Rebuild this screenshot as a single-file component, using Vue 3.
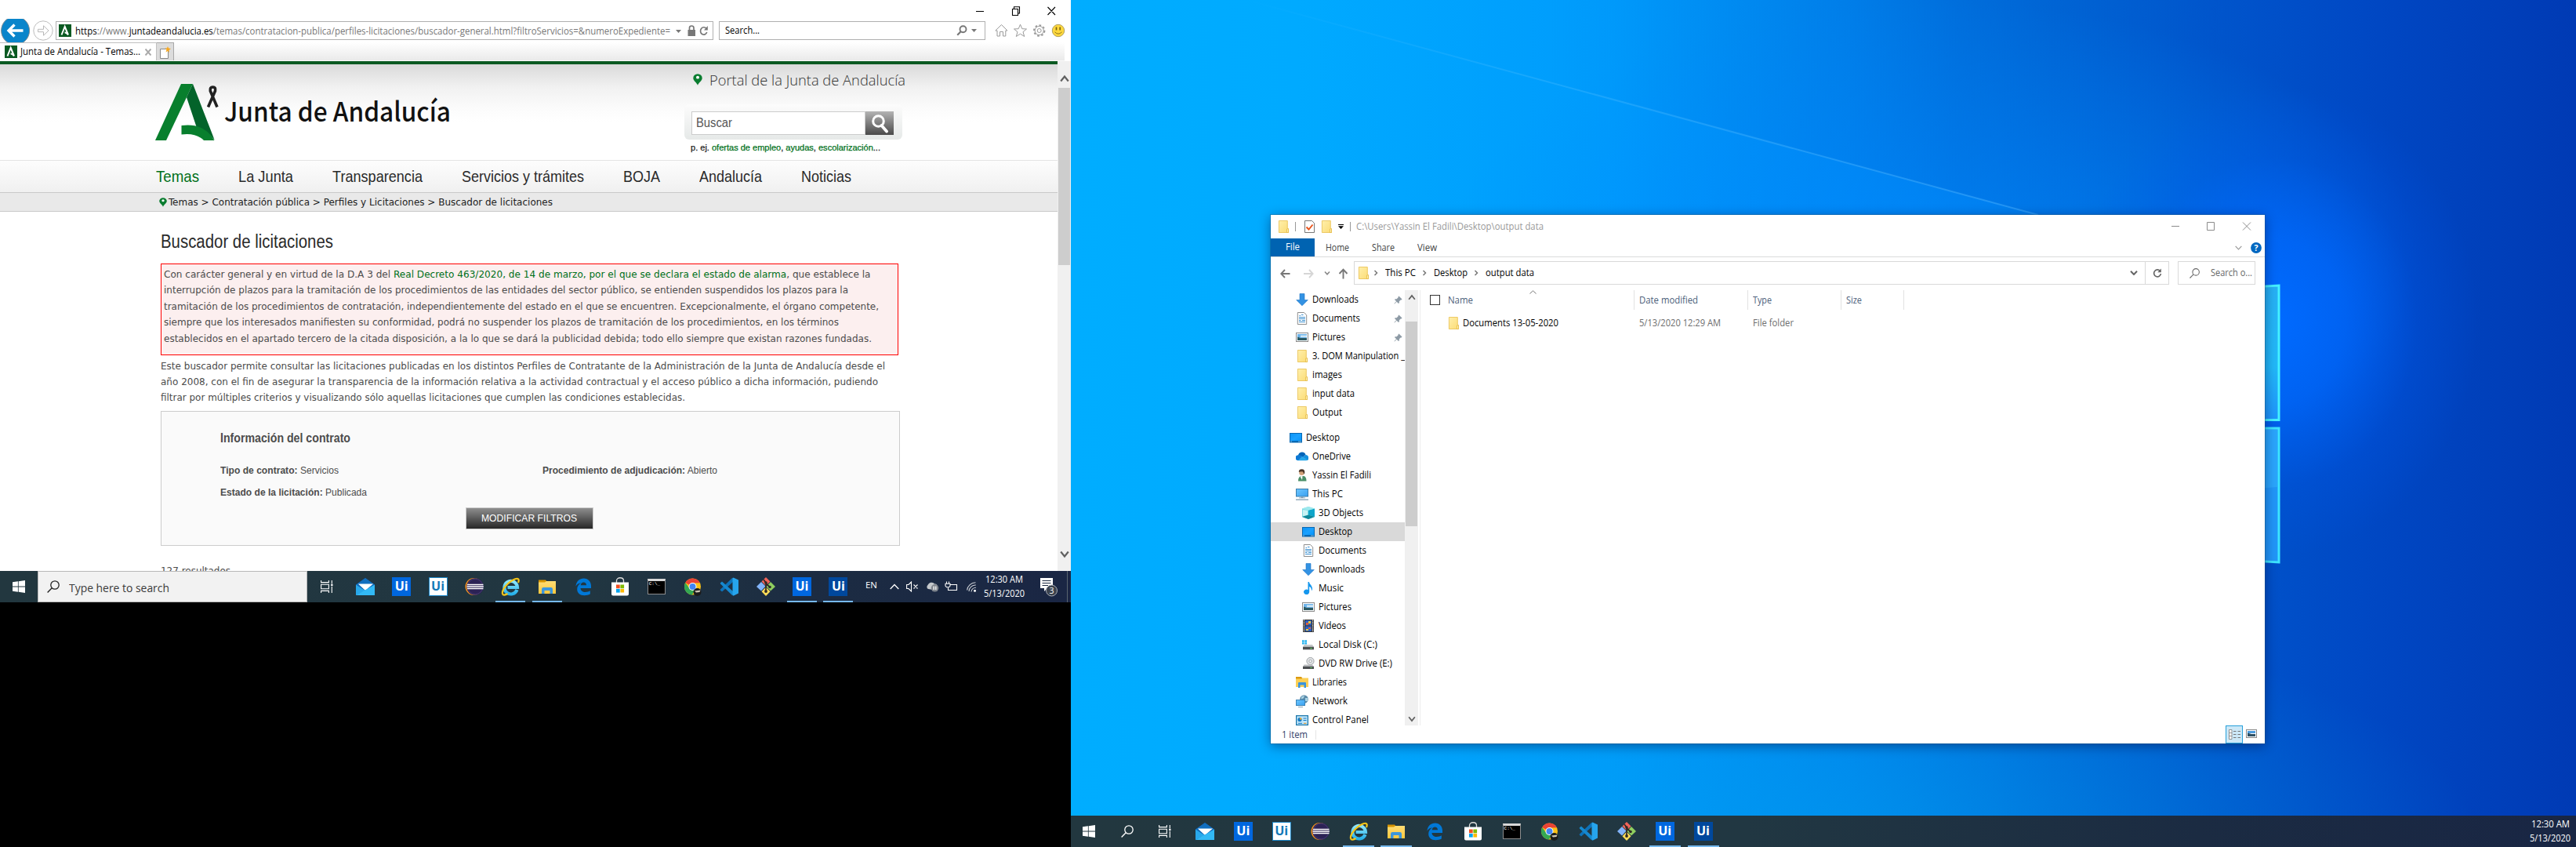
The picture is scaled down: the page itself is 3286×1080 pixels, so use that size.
<script setup>
// Stretches a single line of text to a given pixel width.
const vFit = {
  mounted(el, { value }) {
    const natural = el.getBoundingClientRect().width
    if (!natural) return
    el.style.transform = `scaleX(${value / natural})`
    el.style.marginRight = `${value - natural}px`
  },
}

const nav = [
  ['Temas', 55], ['La Junta', 70], ['Transparencia', 115], ['Servicios y trámites', 156],
  ['BOJA', 47], ['Andalucía', 80], ['Noticias', 64],
]

const intro = [
  ['Este buscador permite consultar las licitaciones publicadas en los distintos Perfiles de Contratante de la Administración de la Junta de Andalucía desde el', 924],
  ['año 2008, con el fin de asegurar la transparencia de la información relativa a la actividad contractual y el acceso público a dicha información, pudiendo', 915],
  ['filtrar por múltiples criterios y visualizando sólo aquellas licitaciones que cumplen las condiciones establecidas.', 669],
]

const notice = [
  ['interrupción de plazos para la tramitación de los procedimientos de las entidades del sector público, se entienden suspendidos los plazos para la', 873],
  ['tramitación de los procedimientos de contratación, independientemente del estado en el que se encuentren. Excepcionalmente, el órgano competente,', 912],
  ['siempre que los interesados manifiesten su conformidad, podrá no suspender los plazos de tramitación de los procedimientos, en los términos', 861],
  ['establecidos en el apartado tercero de la citada disposición, a la lo que se dará la publicidad debida; todo ello siempre que existan razones fundadas.', 903],
]

const apps = [
  { icon: 'mail' }, { tile: 'blue', text: 'Ui' }, { tile: 'white', text: 'Ui' }, { icon: 'eclipse' },
  { icon: 'ie', on: true }, { icon: 'explorer', on: true }, { icon: 'edge' }, { icon: 'store' },
  { tile: 'cmd', text: 'C:\\_' }, { icon: 'chrome' }, { icon: 'vscode' }, { icon: 'git' },
  { tile: 'blue', text: 'Ui', on: true }, { tile: 'navy', text: 'Ui', on: true },
]

const tree = [
  { icon: 'download', name: 'Downloads', w: 59, level: 1, pin: true },
  { icon: 'document', name: 'Documents', w: 61, level: 1, pin: true },
  { icon: 'picture', name: 'Pictures', w: 42, level: 1, pin: true },
  { icon: 'folder', name: '3. DOM Manipulation _', w: 118, level: 1 },
  { icon: 'folder', name: 'images', w: 38, level: 1 },
  { icon: 'folder', name: 'input data', w: 54, level: 1 },
  { icon: 'folder', name: 'Output', w: 38, level: 1, last: true },
  { icon: 'desktop', name: 'Desktop', w: 43, level: 0 },
  { icon: 'onedrive', name: 'OneDrive', w: 49, level: 1 },
  { icon: 'user', name: 'Yassin El Fadili', w: 75, level: 1 },
  { icon: 'pc', name: 'This PC', w: 39, level: 1 },
  { icon: 'cube', name: '3D Objects', w: 57, level: 2 },
  { icon: 'desktop', name: 'Desktop', w: 43, level: 2, selected: true },
  { icon: 'document', name: 'Documents', w: 61, level: 2 },
  { icon: 'download', name: 'Downloads', w: 59, level: 2 },
  { icon: 'music', name: 'Music', w: 32, level: 2 },
  { icon: 'picture', name: 'Pictures', w: 42, level: 2 },
  { icon: 'video', name: 'Videos', w: 35, level: 2 },
  { icon: 'disk', name: 'Local Disk (C:)', w: 75, level: 2 },
  { icon: 'dvd', name: 'DVD RW Drive (E:)', w: 94, level: 2 },
  { icon: 'library', name: 'Libraries', w: 44, level: 1 },
  { icon: 'network', name: 'Network', w: 45, level: 1 },
  { icon: 'control', name: 'Control Panel', w: 72, level: 1 },
]
</script>

<template>
  <svg class="sprite" width="0" height="0">
    <defs>
      <linearGradient id="g-folder" x1="0" y1="0" x2="1" y2="1"><stop offset="0" stop-color="#ffefab" /><stop offset="1" stop-color="#fbdc76" /></linearGradient>
      <linearGradient id="g-screen" x1="0" y1="0" x2="1" y2="1"><stop offset="0" stop-color="#6cc6ff" /><stop offset="1" stop-color="#3aa0f0" /></linearGradient>
      <linearGradient id="g-desk" x1="0" y1="0" x2="1" y2="1"><stop offset="0" stop-color="#0a93f5" /><stop offset=".5" stop-color="#1ba1ff" /><stop offset="1" stop-color="#0090f8" /></linearGradient>
      <linearGradient id="g-ie" x1="0" y1="0" x2="0" y2="1"><stop offset="0" stop-color="#8fe6fb" /><stop offset="1" stop-color="#27b1ea" /></linearGradient>
      <linearGradient id="g-exp" x1="0" y1="0" x2="0" y2="1"><stop offset="0" stop-color="#ffdc74" /><stop offset="1" stop-color="#ffc83d" /></linearGradient>
      <linearGradient id="g-win" x1="0" y1="0" x2="0" y2="1"><stop offset="0" stop-color="#27b0f4" /><stop offset=".6" stop-color="#22b8f8" /><stop offset="1" stop-color="#1f93fb" /></linearGradient>
      <linearGradient id="g-beam" gradientUnits="userSpaceOnUse" x1="224" y1="0" x2="1234" y2="274"><stop offset="0" stop-color="#5fc4ff" stop-opacity="0" /><stop offset=".35" stop-color="#5fc4ff" stop-opacity=".25" /><stop offset="1" stop-color="#4fb4ff" stop-opacity=".45" /></linearGradient>
      <linearGradient id="g-shade" gradientUnits="userSpaceOnUse" x1="600" y1="0" x2="1500" y2="0"><stop offset="0" stop-color="#003fae" stop-opacity="0" /><stop offset=".6" stop-color="#003fae" stop-opacity=".12" /><stop offset="1" stop-color="#003fae" stop-opacity="0" /></linearGradient>
    </defs>
    <symbol id="start" viewBox="0 0 16 16"><path fill="#fff" d="M0 2.3 6.9 1.3V7.6H0zM7.7 1.2 16 0V7.6H7.7zM0 8.4H6.9V14.7L0 13.7zM7.7 8.4H16V16L7.7 14.8z" /></symbol>
    <symbol id="lens" viewBox="0 0 16 16"><circle cx="10" cy="6" r="5.2" fill="none" stroke="currentColor" stroke-width="1.3" /><path d="M6.2 9.8 0.6 15.4" stroke="currentColor" stroke-width="1.4" /></symbol>
    <symbol id="lens-bold" viewBox="0 0 14 14"><circle cx="8.5" cy="5.2" r="4" fill="none" stroke="#777" stroke-width="1.9" /><path d="M5.6 8.3 1.2 12.8" stroke="#777" stroke-width="2.2" /></symbol>
    <symbol id="lens-white" viewBox="0 0 22 24"><circle cx="9.5" cy="8.5" r="6.8" fill="none" stroke="#fff" stroke-width="3" /><path d="M13.5 14 20 21.5" stroke="#fff" stroke-width="3.8" stroke-linecap="round" /></symbol>
    <symbol id="taskview" viewBox="0 0 16 16"><path fill="none" stroke="#fff" stroke-width="1.1" d="M.6 0V2.6H10.4V0M.6 16V13.4H10.4V16M.6 5.2H10.4V10.8H.6zM14.3 0V4.2M14.3 7.8V16" /><path fill="#fff" d="M13.2 4.7h2.3v2.3h-2.3z" /></symbol>
    <symbol id="mail" viewBox="0 0 24 24"><path fill="#0a4f9f" d="M0 9.5 12 1 24 9.5V23H0z" /><path fill="#1478c8" d="M0 9.5 12 1 24 9.5 12 16z" opacity=".75" /><path fill="#fff" d="M3 8.5H22L12 17z" /><path fill="#28a8ea" d="M0 9.5 12 17 0 23z" /><path fill="#32b9f5" d="M24 9.5V23H0z" /></symbol>
    <symbol id="eclipse" viewBox="0 0 24 24"><circle cx="11.5" cy="12" r="11" fill="#f7941e" /><circle cx="13" cy="12" r="10.800" fill="#2c2255" /><circle cx="13.200" cy="12" r="9.800" fill="none" stroke="#4a3f78" stroke-width=".8" /><path stroke="#fff" stroke-width="1.5" d="M3 9.4H23.5M2.6 12H23.8M3 14.6H23.5" /></symbol>
    <symbol id="ie" viewBox="0 0 24 24"><path d="M20.5 16A8.3 8.3 0 1 1 21 13H8.5" fill="none" stroke="url(#g-ie)" stroke-width="4.2" /><path fill="none" stroke="#f5c518" stroke-width="2.2" d="M22 7C23.8 2.8 22 .8 18.2 2.2 9.500 5.5 1 15.500 2 21 2.600 23.500 5.500 23 8.500 21" /></symbol>
    <symbol id="explorer" viewBox="0 0 24 24"><path fill="#d79400" d="M1 3.500H10L12 6H23V9H1z" /><path fill="url(#g-exp)" d="M1 6.500H9L11 5H23V21H1z" /><path fill="#3c96dc" d="M5 21V15.200Q5 13 7.200 13H16.800Q19 13 19 15.200V21H15.500V17H8.500V21z" /></symbol>
    <symbol id="edge" viewBox="0 0 24 24"><path fill="#0078d7" d="M2.500 11.500C3 5 7.500 1.500 12.600 1.500 18.600 1.500 22 6 22 11V14H8.500C8.700 17.500 11.500 19 14.500 19 17 19 19.200 18.300 20.800 17.300V21.500C18.800 22.600 16.300 23.200 13.500 23.200 7.500 23.200 4.200 19.800 4.200 15.200 4.200 11.800 6 9 9.200 7.500 6.300 7.600 4 9 2.500 11.500zM8.700 10.300H16C16 7.800 14.600 6.500 12.500 6.500 10.300 6.500 9 8 8.700 10.300z" /></symbol>
    <symbol id="store" viewBox="0 0 24 24"><path fill="none" stroke="#ddd" stroke-width="1.300" d="M7.500 7V4.500C7.500-.5 16.500-.5 16.500 4.500V7" /><path fill="#fff" d="M1 6.500H23V21.500Q23 23.500 21 23.500H3Q1 23.500 1 21.500z" /><path fill="#f25022" d="M7 9.500h4.700v4.700H7z" /><path fill="#7fba00" d="M12.400 9.500h4.700v4.700h-4.700z" /><path fill="#00a4ef" d="M7 14.900h4.700v4.700H7z" /><path fill="#ffb900" d="M12.400 14.900h4.700v4.700h-4.700z" /></symbol>
    <symbol id="chrome" viewBox="0 0 24 24"><circle cx="11.500" cy="12" r="10.500" fill="#fbc116" /><path fill="#ea4335" d="M11.500 12 2.200 7A10.500 10.500 0 0 1 20.900 7.300L11.500 7.400z" /><path fill="#34a853" d="M2.200 7A10.500 10.500 0 0 0 11 22.500L15 14.500 11.500 12 7.300 14z" /><circle cx="11.500" cy="12" r="5" fill="#fff" /><circle cx="11.500" cy="12" r="4" fill="#4285f4" /><circle cx="17.500" cy="19" r="5" fill="#1b1b1b" /><path fill="#f0e6d0" d="M14 17.500 21.500 16.500 20.500 19 16 19.500z" opacity=".85" /></symbol>
    <symbol id="vscode" viewBox="0 0 24 24"><path fill="#0d72b9" d="M17.500 5.500 3 18.500.700 16.600 1 15.500 16.500.500z" /><path fill="#1588cf" d="M17.500 18.500 3 5.500.700 7.400 1 8.500 16.500 23.500z" /><path fill="#26a4ec" d="M17.500.400 24 3.500V20.500L17.500 23.700 16.500 22.500V1.500z" /></symbol>
    <symbol id="git" viewBox="0 0 24 24"><path fill="#f1645a" d="M12 0 17.500 5.500 12 11 6.500 5.500z" /><path fill="#82b4fa" d="M6 6 11.500 11.600 6 17.500 0 12z" /><path fill="#8fce5f" d="M18 6 24 12 18 17.500 12.500 12z" /><path fill="#ffdc58" d="M12 12.500 17.500 18.200 12 24 6.500 18.200z" /><path fill="none" stroke="#2e2a26" stroke-width="1.700" d="M9 3 12 7V18M12 8 17 12.500" /><circle cx="12" cy="7" r="1.800" fill="#2e2a26" /><circle cx="12" cy="18" r="1.900" fill="#2e2a26" /><circle cx="17" cy="12.500" r="1.800" fill="#2e2a26" /></symbol>

    <symbol id="folder" viewBox="0 0 16 16"><path fill="url(#g-folder)" stroke="#e8bf4c" stroke-width=".8" d="M2.400.500H13.300V10.500L14.500 11V15.500H2.400z" /><path fill="#fff0b0" stroke="#e3b53c" stroke-width=".7" d="M12.500 15.500V11L14.500 10.500V15.500z" /></symbol>
    <symbol id="download" viewBox="0 0 16 16"><path fill="#3392e3" stroke="#1c74c4" stroke-width=".6" d="M5 .500H11V8.500H15.300L8 15.800.700 8.500H5z" /></symbol>
    <symbol id="document" viewBox="0 0 16 16"><path fill="#fff" stroke="#808080" stroke-width=".9" d="M2.300.500H10.500L13.700 3.700V15.500H2.300z" /><path stroke="#3a8fd0" d="M4 6.500H12M4 8.500H12M7 3.500H9.500M4.500 4.500H6M4 10.500H6.500M4 12.500H12M8 10.500H12" /></symbol>
    <symbol id="picture" viewBox="0 0 16 16"><rect x=".5" y="2.500" width="15" height="11" fill="#fff" stroke="#8a8a8a" /><path fill="#6fb4ea" d="M2 4H14V9H2z" /><path fill="#cfe6f5" d="M6 5.500H14V8H6z" /><path fill="#2d5a63" d="M2 7.500 6 9H14V12H2z" /></symbol>
    <symbol id="desktop" viewBox="0 0 16 16"><rect x=".5" y="2.500" width="15" height="11.500" fill="url(#g-desk)" stroke="#0868b4" /><path fill="#04599d" d="M1 12.300H15V13.700H1z" /><path stroke="#fff" stroke-dasharray="1 1" d="M1.500 13H2.500M11.500 13H15" /></symbol>
    <symbol id="onedrive" viewBox="0 0 16 11"><path fill="#0364b8" d="M3 4A5 5 0 0 1 12.500 3L8 8 1 6z" /><path fill="#1490df" d="M12 3.500A4 4 0 0 1 15 10.500H6z" /><path fill="#28a8ea" d="M2.800 10.700A3 3 0 0 1 3 4Q6 3.500 8 5.500L15 9.800Q14.500 10.700 13 10.700z" /><path fill="#0f78d4" d="M3 4Q6 3.500 8 5.500L3 10.500A3 3 0 0 1 3 4z" /></symbol>
    <symbol id="user" viewBox="0 0 16 16"><path fill="#4a8f68" d="M3 15.500Q3 9.500 7 9H10Q13.500 9.500 13.500 15.500z" /><path fill="#fff" d="M5.500 9.500 8 14 8.500 9z" /><circle cx="7.500" cy="4.800" r="3.300" fill="#d3a27a" /><path fill="#4b3628" d="M3.800 4Q3.500.300 7.500.200 12 .300 11.200 5.500L10 6.500Q10 3.500 8 3.300 5 3.500 3.800 4z" /></symbol>
    <symbol id="pc" viewBox="0 0 16 16"><rect x=".5" y="1.500" width="15" height="9.500" fill="url(#g-screen)" stroke="#3b7dab" /><path fill="#7b99ae" d="M6.500 11.500H9.500V12.500H12V13.200H4V12.500H6.500zM0 14.600H16V15.700H0z" /></symbol>
    <symbol id="cube" viewBox="0 0 16 16"><path fill="#7fdbe3" d="M8 0 16 2.500V13L8 16 0 13V2.500z" /><path fill="#c7f2f4" d="M1 4 7 5V11L1 12z" /><path fill="#0fa5c9" d="M8 4.500 16 2.500V13L8 10.500z" /><path fill="#0f8799" d="M8 10.500 16 13 8 16 0 13z" /><path fill="#9de9ee" d="M8 0 16 2.500 8 4.700 0 2.500z" /></symbol>
    <symbol id="music" viewBox="0 0 16 16"><path fill="#1597ee" d="M7.500 0H9C9 3 13.500 4.500 13 9.500L12 11.500C12 8.500 11.500 7 9.200 6V12.500A3.600 3.300 0 1 1 7.500 10z" /></symbol>
    <symbol id="video" viewBox="0 0 16 16"><path fill="#333" d="M1 0H15V16H1z" /><path fill="#2c62c4" d="M4 1H12V7.500H4zM4 8.500H12V15H4z" /><path fill="#d85c3c" d="M5 4H8V7H5zM8 10H11V12H8z" /><path fill="#e9c63c" d="M8 2H11V5H8zM5 12H8V14H5z" /><path stroke="#fff" stroke-width="1.200" stroke-dasharray="1.200 1" d="M2.400 .6V16M13.600 .6V16" /></symbol>
    <symbol id="disk" viewBox="0 0 16 16"><path fill="#1fb0ee" d="M0 2.300H2.600V4.700H0zM3.300 2.300H6V4.700H3.300zM0 5.300H2.600V7.600H0zM3.300 5.300H6V7.600H3.300z" /><path fill="#c6c8ca" d="M2.500 8H13L15 11H1z" /><path fill="#4c4f52" d="M1 10.800H15V14.300H1z" /><path fill="#5be35b" d="M10.500 12H12.500V13.200H10.500z" /></symbol>
    <symbol id="dvd" viewBox="0 0 16 16"><circle cx="10.500" cy="5" r="4.600" fill="#e2e4e6" stroke="#8f9498" stroke-width=".8" /><circle cx="10.500" cy="5" r="1.700" fill="#fff" stroke="#8f9498" stroke-width=".8" /><path fill="#b9bcbf" d="M2.500 9.500H13L15 12H1z" /><path fill="#4c4f52" d="M1 11.800H15V15H1z" /><path fill="#5be35b" d="M10.500 13H12.500V14H10.500z" /></symbol>
    <symbol id="library" viewBox="0 0 16 16"><path fill="#dc9a10" d="M0 1H7L8.500 3H12V5H0z" /><path fill="#fccf55" d="M0 3.500H7L8.500 2.500H16V14H0z" /><path fill="#3a94dd" d="M3 15V9Q3 8 4 8H12Q13 8 13 9V15H10.500V11.500H5.500V15z" /></symbol>
    <symbol id="network" viewBox="0 0 16 16"><circle cx="10.500" cy="5.500" r="5.300" fill="#5b8ba9" /><path fill="#a9d3e4" d="M7 2.500 11 .700 10 4 7 5.500zM12 4 15.500 4 15 8 12 8z" /><rect x=".5" y="6.500" width="11" height="7" fill="url(#g-screen)" stroke="#3b84b8" /><path fill="#8ba5b5" d="M3 15H9V16H3z" /></symbol>
    <symbol id="control" viewBox="0 0 16 16"><rect x=".6" y="2.600" width="14.800" height="11.800" fill="#bfe5fa" stroke="#1673a8" stroke-width="1.200" /><circle cx="5" cy="7.500" r="2.600" fill="#1479c4" /><path fill="#f5a623" d="M5 7.500V4.900A2.600 2.600 0 0 1 7.600 7.500z" /><path stroke="#1479c4" d="M9.500 6H13.500M9.500 8.500H13.500M3 12.300H8" /><path stroke="#e58e1a" d="M10 12.300H13.500" /></symbol>
    <symbol id="pin" viewBox="0 0 12 12"><path fill="#8d9aa5" d="M7 .5 11.500 5 10.500 6 9.800 5.700 7.500 8 7.500 10 6.500 11 4 8.500 1 11.500.500 11 3.500 8 1 5.500 2 4.500H4L6.300 2.200 6 1.500z" /></symbol>
    <symbol id="leaf-a" viewBox="0 0 16 16"><rect width="16" height="16" fill="#0b5a22" /><path fill="none" stroke="#fff" stroke-width="2" d="M3.500 13.500 7.700 3 12 13.500" /><path fill="none" stroke="#fff" stroke-width="1.800" d="M7.500 10.500Q9.500 10.300 11.500 13" /></symbol>
    <symbol id="marker" viewBox="0 0 12 16" preserveAspectRatio="none"><path fill="#0a7d30" d="M6 .300A5.700 5.500 0 0 1 11.700 6C11.700 9.500 7 12 6 15.700 5 12 .300 9.500.300 6A5.700 5.500 0 0 1 6 .300z" /><circle cx="6" cy="5" r="2" fill="#fff" /></symbol>
    <symbol id="up" viewBox="0 0 12 10"><path fill="none" stroke="currentColor" stroke-width="2.200" d="M1.200 8.500 6 2.500 10.800 8.500" /></symbol>
    <symbol id="thin-down" viewBox="0 0 10 6"><path fill="none" stroke="currentColor" stroke-width="1.300" d="M.7.700 5 5 9.300.700" /></symbol>
    <symbol id="reload" viewBox="0 0 12 12"><path fill="none" stroke="currentColor" stroke-width="1.700" d="M9.300 3.400A4.400 4.400 0 1 0 10.400 7" /><path fill="currentColor" d="M10.800.500V5.200H6.200z" /></symbol>
  </svg>

  <div class="space">
    <section class="left">
      <div class="ie">
        <div class="caption">
          <svg width="102" height="12" viewBox="0 0 102 12"><path fill="none" stroke="#000" stroke-width="1.100" d="M0 6.500H10M46.500 3.500H53.500V11.500H46.500zM48.500 3.500V.700H55.500V9H53.500M91.500 1 101 11M101 1 91.500 11" /></svg>
        </div>
        <div class="addressbar">
          <svg class="history" width="70" height="30" viewBox="0 0 70 30"><circle cx="19.600" cy="15" r="18" fill="#0a85cb" stroke="#7d8a92" /><path fill="none" stroke="#fff" stroke-width="3.400" d="M29.500 15H11.500M18.500 7.500 11 15 18.500 22.500" /><circle cx="55" cy="15" r="12.200" fill="#fff" stroke="#bdbdbd" /><path fill="#fff" stroke="#b8b8b8" d="M48.500 13.300H55.500V8.800L62 15 55.500 21.200V16.700H48.500z" /></svg>
          <div class="url">
            <svg width="16" height="16"><use href="#leaf-a" /></svg>
            <span v-fit="759" class="line"><b>https</b>://www.<b>juntadeandalucia.es</b>/temas/contratacion-publica/perfiles-licitaciones/buscador-general.html?filtroServicios=&amp;numeroExpediente=</span>
            <svg class="urltools" width="42" height="16" viewBox="0 0 42 16"><path fill="#777" d="M0 7H7L3.500 11zM15.500 7H25V15H15.500z" /><path fill="none" stroke="#777" stroke-width="1.700" d="M17.500 7.500V4.500Q17.500 2 20.200 2T23 4.500V7.500M39 5.500A4.200 4.700 0 1 0 39.700 10" /><path fill="#777" d="M40.800 2V7.400H36z" /></svg>
          </div>
          <div class="iesearch">
            <span v-fit="44" class="line">Search...</span>
            <svg width="14" height="14"><use href="#lens-bold" /></svg>
            <svg class="tri" width="7" height="4" viewBox="0 0 7 4"><path fill="#777" d="M0 0H7L3.500 4z" /></svg>
          </div>
          <svg class="tools" width="90" height="18" viewBox="0 0 90 18"><g fill="none" stroke="#9a9a9a"><path d="M.8 9 8.500 1.500 16 9H13.800V16H10.500V10.500H6.500V16H3V9z" /><path d="M32.500 1.200 34.800 6.700 40.500 7 36 10.700 37.700 16.500 32.500 13.200 27.300 16.500 29 10.700 24.500 7 30.200 6.700z" /><circle cx="56.700" cy="9" r="6.700" stroke-width="2" stroke-dasharray="2.600 2.600" /><circle cx="56.700" cy="9" r="5.600" /><circle cx="56.700" cy="9" r="2.500" /></g><circle cx="81" cy="9" r="7.700" fill="#ffd83d" stroke="#b0a060" /><path stroke="#7a6410" stroke-width="1.700" d="M78.500 4.500V8.500M83.200 4.500V8.500" /><path fill="none" stroke="#8a7420" d="M76.500 10.800Q81 15.500 85.500 10.800" /></svg>
        </div>
        <div class="tabs">
          <div class="tab">
            <svg width="16" height="16"><use href="#leaf-a" /></svg>
            <span v-fit="153" class="line">Junta de Andalucía - Temas...</span>
            <svg width="8" height="9" viewBox="0 0 8 9"><path stroke="#aaa" stroke-width="2" d="M.5.500 7.500 8.500M7.500.500.500 8.500" /></svg>
          </div>
          <div class="newtab"><svg width="16" height="16" viewBox="0 0 16 16"><path fill="#fff" stroke="#888" d="M2.500 3.500H12.500V15.500H2.500z" /><path fill="#f5a61d" d="M12 0 13 2.500 16 3 13.500 5 14 8 12 6 9.500 7.500 10.500 4.500 8.500 2.500 11 2.500z" /></svg></div>
        </div>
        <div class="viewport">
          <main class="page">
            <header class="masthead">
              <svg class="logo" width="82" height="73" viewBox="0 0 82 73"><path fill="#087f2d" d="M0 72 33 0H48L40 17 14 72z" /><path fill="#03632a" d="M48 0 40 17 53 56Q66 60 75.500 71z" /><path fill="#087f2d" d="M33.500 53Q62 49 75.500 72H62Q52 62 33.500 64.500z" /><path fill="none" stroke="#222" stroke-width="3.600" d="M67.500 29.500 76.500 9Q77.500 4 73.500 4T70.300 9L79 29.500" /></svg>
              <span v-fit="289" class="brand">Junta de Andalucía</span>
              <div class="aside">
                <div class="portal"><svg width="12" height="15"><use href="#marker" /></svg><span v-fit="250" class="line">Portal de la Junta de Andalucía</span></div>
                <div class="searchbox"><div class="field"><span v-fit="46" class="line">Buscar</span></div><div class="go"><svg width="22" height="24"><use href="#lens-white" /></svg></div></div>
                <p class="hint"><span v-fit="242" class="line">p. ej. <a>ofertas de empleo</a>, <a>ayudas</a>, <a>escolarización</a>...</span></p>
              </div>
            </header>
            <nav class="menu"><span v-for="[t, w] in nav" :key="t" v-fit="w" class="line" :class="{ on: t === 'Temas' }">{{ t }}</span></nav>
            <div class="crumbs"><svg width="10" height="12"><use href="#marker" /></svg><span v-fit="490" class="line">Temas &gt; Contratación pública &gt; Perfiles y Licitaciones &gt; Buscador de licitaciones</span></div>
            <h1><span v-fit="220" class="line">Buscador de licitaciones</span></h1>
            <div class="alert">
              <p><span v-fit="901.500" class="line">Con carácter general y en virtud de la D.A 3 del <a>Real Decreto 463/2020, de 14 de marzo, por el que se declara el estado de alarma</a>, que establece la</span></p>
              <p v-for="[t, w] in notice" :key="t"><span v-fit="w" class="line">{{ t }}</span></p>
            </div>
            <div class="intro"><p v-for="[t, w] in intro" :key="t"><span v-fit="w" class="line">{{ t }}</span></p></div>
            <section class="contract">
              <h2><span v-fit="166" class="line">Información del contrato</span></h2>
              <div class="facts">
                <p><span v-fit="151" class="line"><b>Tipo de contrato:</b> Servicios</span></p>
                <p><span v-fit="223" class="line"><b>Procedimiento de adjudicación:</b> Abierto</span></p>
                <p><span v-fit="187" class="line"><b>Estado de la licitación:</b> Publicada</span></p>
              </div>
              <button><span v-fit="122" class="line">MODIFICAR FILTROS</span></button>
            </section>
            <p class="results"><span v-fit="89" class="line">127 resultados</span></p>
          </main>
          <div class="scroll">
            <svg width="12" height="10"><use href="#up" /></svg>
            <div class="thumb"></div>
            <svg class="flip" width="12" height="10"><use href="#up" /></svg>
          </div>
        </div>
      </div>
      <footer class="taskbar first">
        <div class="cell start"><svg width="16" height="16"><use href="#start" /></svg></div>
        <div class="cortana"><svg width="16" height="16"><use href="#lens" /></svg><span v-fit="128" class="line">Type here to search</span></div>
        <div class="cell tv"><svg width="16" height="16"><use href="#taskview" /></svg></div>
        <div v-for="(a, n) in apps" :key="n" class="cell app" :class="{ on: a.on }"><svg v-if="a.icon" width="24" height="24"><use :href="'#' + a.icon" /></svg><b v-else class="tile" :class="a.tile">{{ a.text }}</b></div>
        <div class="tray">
          <span v-fit="15" class="line en">EN</span>
          <svg class="t1" width="12" height="8" viewBox="0 0 12 8"><path fill="none" stroke="#fff" stroke-width="1.300" d="M.7 7 6 1.500 11.300 7" /></svg>
          <svg class="t2" width="16" height="14" viewBox="0 0 16 14"><path fill="none" stroke="#fff" stroke-width="1.100" d="M.6 4.500H3L6.500 1V13L3 9.500H.6zM9.500 4.500 14.500 9.500M14.500 4.500 9.500 9.500" /></svg>
          <svg class="t3" width="17" height="14" viewBox="0 0 17 14"><path fill="#c4c8cc" d="M3 10A3 3 0 0 1 2.500 5 5 5 0 0 1 11 3.500Q15 3 15 8L9 11z" /><circle cx="11.500" cy="8.800" r="4.800" fill="#80868e" /><path stroke="#fff" stroke-width="1.300" d="M10.200 6.500V11M12.800 6.500V11" /></svg>
          <svg class="t4" width="17" height="14" viewBox="0 0 17 14"><path fill="none" stroke="#fff" stroke-width="1.100" d="M7 4.500H15.500V11.500H4.500V8.500M2.500.500V3M5.500.500V3M1 3.300H7V6L5.500 7.800H2.500L1 6z" /></svg>
          <svg class="t5" width="13" height="13" viewBox="0 0 13 13"><path fill="none" stroke="#ccd0d6" stroke-width="1.100" d="M.6 10.500A11 11 0 0 1 11.500.800M3 12A8.500 8.500 0 0 1 11.800 4M6 12.500A6 6 0 0 1 12 7.200" /><circle cx="10.500" cy="11.300" r="1.500" fill="#fff" /></svg>
          <div class="clock"><span v-fit="48" class="line">12:30 AM</span><span v-fit="52" class="line">5/13/2020</span></div>
          <svg class="t6" width="24" height="26" viewBox="0 0 24 26"><path fill="#fff" d="M0 0H16V13H9L5 17V13H0z" /><path stroke="#1c2a44" d="M2.500 3.500H13.500M2.500 6.500H13.500M2.500 9.500H10" /><circle cx="14.500" cy="16" r="7" fill="#3b424e" stroke="#a7acb5" /><text x="14.500" y="19.700" text-anchor="middle" font-family="Open Sans" font-size="10.500" fill="#fff">3</text></svg>
          <i class="peek"></i>
        </div>
      </footer>
    </section>

    <section class="right">
      <svg class="rays" width="1920" height="1040" viewBox="0 0 1920 1040">
        <path d="M224 0 1234 274H1520V0z" fill="url(#g-shade)" />
        <path d="M224 0 1234 274" stroke="url(#g-beam)" stroke-width="2" />
        <path fill="url(#g-win)" stroke="#45f0ff" stroke-width="3" d="M1400 372 1541 364V535.500H1400z" />
        <path fill="#2196f8" stroke="#3de4ff" stroke-width="3" d="M1400 546H1541V717L1400 709z" />
        <path fill="#33b4ff" opacity=".5" d="M1400 548H1539V621L1400 632z" />
      </svg>

      <div class="explorer">
        <div class="title">
          <svg width="16" height="16"><use href="#folder" /></svg><i></i>
          <svg class="props" width="14" height="16" viewBox="0 0 14 16"><path fill="#fff" stroke="#777" d="M.5.500H9.500L12.500 3.500V15.500H.500z" /><path fill="none" stroke="#e8541d" stroke-width="1.900" d="M2.500 8.500 5.500 11.500 10.500 5.500" /></svg>
          <svg class="new" width="16" height="16"><use href="#folder" /></svg>
          <svg class="more" width="7" height="6" viewBox="0 0 7 6"><path d="M0 0H7V1H0zM0 2.200H7L3.500 6z" /></svg><i class="i2"></i>
          <span v-fit="239" class="line">C:\Users\Yassin El Fadili\Desktop\output data</span>
          <svg class="controls" width="102" height="11" viewBox="0 0 102 11"><path fill="none" stroke="#8c8c8c" d="M0 5.500H10M45.500.500H54.500V10.500H45.500zM91 .500 101 10.500M101 .500 91 10.500" /></svg>
        </div>
        <div class="ribbon">
          <span class="file"><span v-fit="18" class="line">File</span></span>
          <span v-fit="30" class="line r1">Home</span><span v-fit="29" class="line r2">Share</span><span v-fit="25" class="line r2">View</span>
          <svg class="chev" width="9" height="6"><use href="#thin-down" /></svg>
          <svg width="14" height="14" viewBox="0 0 14 14"><circle cx="7" cy="7" r="6.900" fill="#0067c0" /><text x="7" y="10.800" text-anchor="middle" font-family="Open Sans" font-weight="700" font-size="10.500" fill="#fff">?</text></svg>
        </div>
        <div class="navrow">
          <svg class="arrows" width="88" height="14" viewBox="0 0 88 14"><path fill="none" stroke="#777" stroke-width="1.900" d="M12.500 7H1.500M6 2 1.200 7 6 12M80.500 13.500V2M75.500 7 80.500 1.700 85.500 7" /><path fill="none" stroke="#d6d6d6" stroke-width="1.900" d="M30 7H41M37 2 41.600 7 37 12" /><path fill="none" stroke="#888" stroke-width="1.600" d="M57 4.500 60 7.800 63 4.500" /></svg>
          <div class="path">
            <svg width="16" height="16"><use href="#folder" /></svg>
            <svg class="c" width="6" height="8" viewBox="0 0 6 8"><path fill="none" stroke="#777" stroke-width="1.500" d="M1.500 1 4.500 4 1.500 7" /></svg><span v-fit="39" class="line">This PC</span>
            <svg class="c" width="6" height="8" viewBox="0 0 6 8"><path fill="none" stroke="#777" stroke-width="1.500" d="M1.500 1 4.500 4 1.500 7" /></svg><span v-fit="43" class="line">Desktop</span>
            <svg class="c" width="6" height="8" viewBox="0 0 6 8"><path fill="none" stroke="#777" stroke-width="1.500" d="M1.500 1 4.500 4 1.500 7" /></svg><span v-fit="62" class="line">output data</span>
            <svg class="drop" width="10" height="6" viewBox="0 0 10 6"><path fill="none" stroke="#666" stroke-width="2" d="M1 .800 5 5 9 .800" /></svg>
            <div class="refresh"><svg width="12" height="12"><use href="#reload" /></svg></div>
          </div>
          <div class="find"><svg width="13" height="13"><use href="#lens" /></svg><span v-fit="53" class="line">Search o...</span></div>
        </div>
        <div class="panes">
          <div class="tree">
            <div v-for="(n, k) in tree" :key="k" class="node" :class="['l' + n.level, { selected: n.selected, last: n.last }]">
              <svg width="16" height="16"><use :href="'#' + n.icon" /></svg>
              <span v-fit="n.w" class="line">{{ n.name }}</span>
              <svg v-if="n.pin" class="pin" width="11" height="11"><use href="#pin" /></svg>
            </div>
          </div>
          <div class="scroll small">
            <svg width="10" height="8"><use href="#up" /></svg>
            <div class="thumb"></div>
            <svg class="flip" width="10" height="8"><use href="#up" /></svg>
          </div>
          <div class="list">
            <svg class="sort" width="9" height="5" viewBox="0 0 9 5"><path fill="none" stroke="#777" d="M.5 4.500 4.500.800 8.500 4.500" /></svg>
            <div class="heads">
              <div class="h name"><i></i><span v-fit="32" class="line">Name</span></div>
              <div class="h date"><span v-fit="75" class="line">Date modified</span></div>
              <div class="h type"><span v-fit="24" class="line">Type</span></div>
              <div class="h size"><span v-fit="20" class="line">Size</span></div>
            </div>
            <div class="entry">
              <div class="name"><svg width="16" height="16"><use href="#folder" /></svg><span v-fit="122" class="line">Documents 13-05-2020</span></div>
              <div class="date"><span v-fit="104" class="line">5/13/2020 12:29 AM</span></div>
              <div class="type"><span v-fit="52" class="line">File folder</span></div>
            </div>
          </div>
        </div>
        <div class="status">
          <span v-fit="33" class="line">1 item</span><i></i>
          <svg class="views" width="42" height="23" viewBox="0 0 42 23"><rect x=".5" y=".5" width="21" height="22" fill="#cce8f7" stroke="#26a0da" /><path fill="#fff" stroke="#888" stroke-width=".9" d="M4.500 5.500H8V17.500H4.500zM4.500 9.500H8M4.500 13.500H8" /><path stroke="#777" d="M10 7.500H13.500M10 11.500H13.500M10 15.500H13.500M15.500 7.500H19M15.500 11.500H19M15.500 15.500H19" /><rect x="26.500" y="5.500" width="13" height="10" fill="#fff" stroke="#888" /><path fill="#4d9de0" d="M28 7H38V10H28z" /><path fill="#2d4f63" d="M28 9.500 33 11H38V14H28z" /></svg>
        </div>
      </div>

      <footer class="taskbar second">
        <div class="cell sys"><svg width="16" height="16"><use href="#start" /></svg></div>
        <div class="cell sys"><svg width="16" height="16"><use href="#lens" /></svg></div>
        <div class="cell sys"><svg width="16" height="16"><use href="#taskview" /></svg></div>
        <div v-for="(a, n) in apps" :key="n" class="cell app" :class="{ on: a.on }"><svg v-if="a.icon" width="24" height="24"><use :href="'#' + a.icon" /></svg><b v-else class="tile" :class="a.tile">{{ a.text }}</b></div>
        <div class="clock"><span v-fit="49" class="line">12:30 AM</span><span v-fit="52" class="line">5/13/2020</span></div>
      </footer>
    </section>
  </div>
</template>

<style>
body { margin: 0; background: #000; }
</style>

<style scoped>
* { box-sizing: border-box; }
p, h1, h2 { margin: 0; font-weight: 400; }
svg { display: block; flex: none; }
.sprite { position: absolute; }
.line, .brand { display: inline-block; flex: none; white-space: nowrap; transform-origin: 0 50%; }
.space { display: flex; width: 3286px; height: 1080px; overflow: hidden; background: #000; font: 12px/16px "Open Sans", "Noto Sans", sans-serif; color: #000; }
.left { width: 1366px; height: 768px; flex: none; overflow: hidden; }

/* browser */
.ie { height: 728px; background: #fff; overflow: hidden; display: flex; flex-direction: column; }
.caption { height: 24px; flex: none; padding: 8px 0 0 1245px; }
.addressbar { height: 30px; flex: none; display: flex; align-items: center; overflow: hidden; }
.history { margin-right: 1px; overflow: hidden; }
.url { width: 839px; height: 24px; border: 1px solid #b0b0b0; display: flex; align-items: center; padding-left: 3px; color: #777; }
.url .line { margin-left: 5px; padding-top: 1px; }
.url b { font-weight: 400; color: #000; }
.urltools { margin-left: 7px; }
.iesearch { width: 340px; height: 24px; margin-left: 7px; border: 1px solid #b0b0b0; display: flex; align-items: center; padding-left: 7px; }
.iesearch svg { margin-left: 251px; }
.iesearch .tri { margin-left: 5px; }
.tools { margin-left: 12px; }
.tabs { height: 24px; flex: none; display: flex; width: 1358px; background: linear-gradient(#fff, #eaeaea); border-bottom: 1px solid #f8f8f8; }
.tab { width: 200px; height: 23px; border: 1px solid #c0c0c0; border-width: 1px 1px 0 0; background: #fff; display: flex; align-items: center; padding-left: 6px; }
.tab .line { margin-left: 4px; }
.tab svg:last-child { margin-left: 6px; }
.newtab { width: 22px; height: 23px; background: #dcdcdc; border: 1px solid #a8a8a8; border-width: 1px 1px 0 0; padding: 4px 0 0 2px; }
.viewport { display: flex; height: 650px; }
.page { width: 1349px; height: 650px; overflow: hidden; border-top: 4px solid #0b5a22; font-family: "DejaVu Sans Condensed", "DejaVu Sans", sans-serif; color: #4c4c4c; }
.masthead { height: 122px; display: flex; background: linear-gradient(#dadada, #f1f1f1 24%, #fbfbfb 45%, #fff 60%); }
.logo { margin: 25px 0 0 198px; }
.brand { margin: 39px 0 0 6px; height: 40px; font: 500 34px/40px "Noto Sans CJK SC", "Noto Sans", sans-serif; color: #111; }
.aside { margin-left: 298px; width: 278px; }
.portal { display: flex; height: 51px; padding: 12px 0 0 11px; }
.portal .line { margin-left: 9px; margin-top: -4px; font: 300 18px/24px "Open Sans", sans-serif; color: #333; }
.searchbox { height: 45px; display: flex; padding: 9px 0 0 9px; border-radius: 6px; background: linear-gradient(#fcfcfc, #e6e9e8); }
.field { width: 222px; height: 30px; border: 1px solid #ccc; background: #fff; padding: 6px 0 0 5px; }
.field .line { font: 16px/16px "Liberation Sans", sans-serif; color: #555; }
.go { width: 36px; height: 30px; background: linear-gradient(#b4b4b4, #4a4a4a); padding: 4px 0 0 7px; }
.hint { padding: 4px 0 0 8px; font: 11px/12px "Liberation Sans", sans-serif; color: #222; -webkit-text-stroke: .25px; height: 20px; }
.hint a, .alert a { color: #00701a; }
.menu { height: 42px; display: flex; gap: 50px; padding: 9px 0 0 199px; border: 1px solid #c9c9c9; border-width: 1px 0; border-top-color: #e4e4e4; background: linear-gradient(#fdfdfd, #f0f0f0); }
.menu .line { font: 21px/22px "Liberation Sans", sans-serif; color: #2a2a2a; }
.menu .on { color: #00701a; }
.crumbs { height: 24px; display: flex; align-items: center; padding-left: 202.500px; background: #e9e9e9; border-bottom: 1px solid #c9c9c9; color: #222; }
.crumbs .line { margin-left: 2.500px; font-size: 12.500px; }
h1 { height: 66px; padding: 25px 0 0 205px; }
h1 .line { font: 23px/26px "Liberation Sans", sans-serif; color: #2a2a2a; }
.alert { width: 941px; height: 117px; margin-left: 205px; border: 1px solid #f00; background: #fcefef; padding: 2.500px 0 0 2.500px; }
.alert p { height: 20.600px; line-height: 20.600px; font-size: 13px; }
.intro { padding: 3.500px 0 0 204.500px; height: 71px; }
.intro p { height: 20px; line-height: 20px; font-size: 13px; }
.contract { width: 943px; height: 172px; margin-left: 205px; border: 1px solid #ccc; background: #fafafa; font-family: "Liberation Sans", sans-serif; padding-top: 24px; }
h2 { height: 44px; padding-left: 75px; }
h2 .line { font: 700 17px/20px "Liberation Sans", sans-serif; }
.facts { display: grid; grid-template-columns: 411px 1fr; padding-left: 75px; grid-auto-rows: 28px; font-size: 12.500px; line-height: 14px; }
.facts b { font-weight: 700; }
.contract button { display: flex; width: 163px; height: 28px; margin: -2px 0 0 388px; padding: 0 0 0 19px; align-items: center; border: 1px solid #ccc; background: linear-gradient(#8e8e8e, #262626); color: #fff; font: 13px/16px "Liberation Sans", sans-serif; }
.results { padding: 23px 0 0 205px; line-height: 18px; font-size: 13px; }
.scroll { width: 17px; height: 650px; background: #f0f0f0; display: flex; flex-direction: column; align-items: center; padding-top: 17px; color: #606060; }
.scroll .thumb { width: 15px; height: 226px; margin-top: 7px; background: #cdcdcd; }
.flip { transform: scaleY(-1); margin-top: auto; margin-bottom: 16px; }

/* taskbars */
.taskbar { height: 40px; display: flex; color: #fff; }
.first { background: linear-gradient(90deg, #22373f, #213641 55%, #1c2c42 75%, #1a2644); }
.cell { display: flex; align-items: center; justify-content: center; flex: none; height: 40px; }
.tile { width: 24px; height: 24px; color: #fff; font: 700 16px/23px "Open Sans", sans-serif; text-align: center; }
.blue { background: #0067df; }
.navy { background: #00489d; }
.white { background: #fff; border: 1.500px solid #1b87c9; color: #1479b8; line-height: 20px; }
.cmd { width: 23px; height: 20px; background: #000; border: 1px solid #8c8c8c; border-top: 3px solid #d8d8d8; color: #ccc; font: 700 6px/8px "Liberation Mono", monospace; text-align: left; padding-left: 1px; }
.start { width: 48px; }
.cortana { width: 344px; background: #f2f2f2; border: 1px solid #b8b8b8; display: flex; align-items: center; padding-left: 11px; color: #222; }
.cortana .line { margin-left: 12px; font-size: 15px; line-height: 20px; padding-top: 2px; color: #3a3a3a; }
.tv { width: 50.500px; }
.first .app { width: 46.450px; }
.app.on { background: linear-gradient(#76b9ed, #76b9ed) 50% 100% / 38px 2px no-repeat; }
.tray { display: flex; align-items: center; margin-left: 11px; }
.en { font-size: 11px; padding-bottom: 4px; }
.t1 { margin-left: 16px; } .t2 { margin-left: 9px; } .t3 { margin-left: 9px; } .t4 { margin-left: 7px; } .t5 { margin-left: 11px; } .t6 { margin-left: 20px; margin-top: 4px; }
.first .clock { margin-left: 9px; }
.clock { display: flex; flex-direction: column; align-items: flex-start; line-height: 18px; width: 52px; font-size: 12px; }
.clock .line:first-child { margin-left: 2px; }
.peek { width: 1px; height: 40px; margin-left: 10px; background: #59636f; }

/* desktop */
.right { position: relative; width: 1920px; height: 1080px; flex: none; background:
  radial-gradient(ellipse 260px 300px at 1535px 410px, #006aff, rgba(0, 104, 255, .75) 35%, rgba(0, 90, 240, .25) 70%, rgba(0, 80, 220, 0)),
  radial-gradient(ellipse 620px 330px at 1100px 330px, rgba(0, 140, 255, .75), rgba(0, 130, 255, 0)),
  radial-gradient(ellipse 800px 300px at 1000px 1080px, rgba(0, 160, 235, .5), rgba(0, 140, 230, 0)),
  linear-gradient(90deg, #00adff 0, #00aaff 15%, #009bfc 36%, #0083ee 52%, #0068d8 65%, #0055cc 76%, #0048c4 86%, #003ab4 100%); }
.rays { position: absolute; left: 0; top: 0; }
.explorer { position: absolute; left: 255px; top: 274px; width: 1268px; height: 674px; background: #fff; box-shadow: 0 0 0 1px rgba(20, 80, 120, .35), 0 3px 14px rgba(0, 10, 50, .45); display: flex; flex-direction: column; }
.title { height: 30px; display: flex; align-items: center; padding: 0 17px 1px 8px; color: #999; }
.title i { width: 1px; height: 12px; background: #999; margin-left: 7px; }
.title .props { margin-left: 11px; }
.title .new { margin-left: 6px; }
.title .more { margin-left: 7px; }
.title .i2 { margin-left: 8px; }
.title .line { margin-left: 7px; }
.controls { margin-left: auto; }
.ribbon { height: 24px; display: flex; align-items: center; border-bottom: 1px solid #dadbdc; padding-right: 4px; color: #444; }
.file { width: 56px; height: 23px; background: #0063b1; color: #fff; padding: 3px 0 0 19px; }
.r1 { margin-left: 14px; } .r2 { margin-left: 29px; }
.chev { margin-left: auto; margin-right: 11px; color: #999; }
.navrow { height: 42px; display: flex; align-items: center; }
.arrows { margin-left: 12px; width: 88px; }
.path { width: 1040px; height: 30px; margin-left: 6px; margin-top: -2px; border: 1px solid #d9d9d9; display: flex; align-items: center; padding-left: 3px; }
.path .c { margin: 0 9px 0 8px; }
.path .c:nth-child(2) { margin-left: 5px; }
.drop { margin-left: auto; margin-right: 9px; }
.refresh { width: 30px; height: 28px; border-left: 1px solid #d9d9d9; display: flex; align-items: center; justify-content: center; color: #666; }
.find { width: 99px; height: 30px; margin: -2px 0 0 11px; border: 1px solid #d9d9d9; display: flex; align-items: center; padding-left: 14px; color: #666; }
.find .line { margin-left: 14px; }
.panes { height: 555px; display: flex; }
.tree { width: 171px; height: 555px; overflow: hidden; }
.node { height: 24px; display: flex; align-items: center; overflow: hidden; }
.node .line { margin-left: 5px; }
.l0 { padding-left: 24px; } .l1 { padding-left: 32px; } .l2 { padding-left: 40px; }
.last { margin-bottom: 8px; }
.selected { background: #d9d9d9; }
.pin { margin-left: auto; margin-right: 3px; }
.small { width: 17px; height: 555px; padding-top: 5px; }
.small .thumb { height: 261px; margin-top: 27px; }
.small .flip { margin-bottom: 4px; }
.list { flex: 1; margin-left: 2px; border-left: 1px solid #ececec; }
.sort { margin: 0 0 -5px 139px; }
.heads, .entry { display: flex; height: 25px; color: #4c607a; }
.h { border-right: 1px solid #e2e2e2; padding-top: 5px; display: flex; }
.name { width: 273px; display: flex; flex: none; }
.h.name i { width: 13px; height: 13px; margin: 1px 10px 0 12px; border: 1px solid #333; }
.date { width: 145px; padding-left: 6px; flex: none; }
.type { width: 119px; padding-left: 6px; flex: none; }
.size { width: 80px; padding-left: 6px; }
.entry { margin-top: 8.500px; color: #6d6d6d; }
.entry .name { color: #000; padding-left: 34px; }
.entry .name svg { margin-right: 4px; }
.status { flex: 1; display: flex; align-items: center; padding: 0 8px 0 14px; color: #33406a; }
.status i { width: 1px; height: 12px; margin-left: 10px; background: #e5e5e5; }
.views { margin-left: auto; }
.second { position: absolute; left: 0; bottom: 0; width: 1920px; background: linear-gradient(90deg, #22373f 0, #213742 45%, #1b2b42 75%, #192644); }
.sys { width: 48.500px; }
.second .sys:first-child { margin-left: -1px; }
.second .app { width: 48.900px; }
.second .app:nth-child(4) { margin-left: 2px; }
.second .app.on { background-size: 40px 2px; }
.second .clock { margin-left: auto; margin-right: 7px; padding-top: 2px; }
</style>
